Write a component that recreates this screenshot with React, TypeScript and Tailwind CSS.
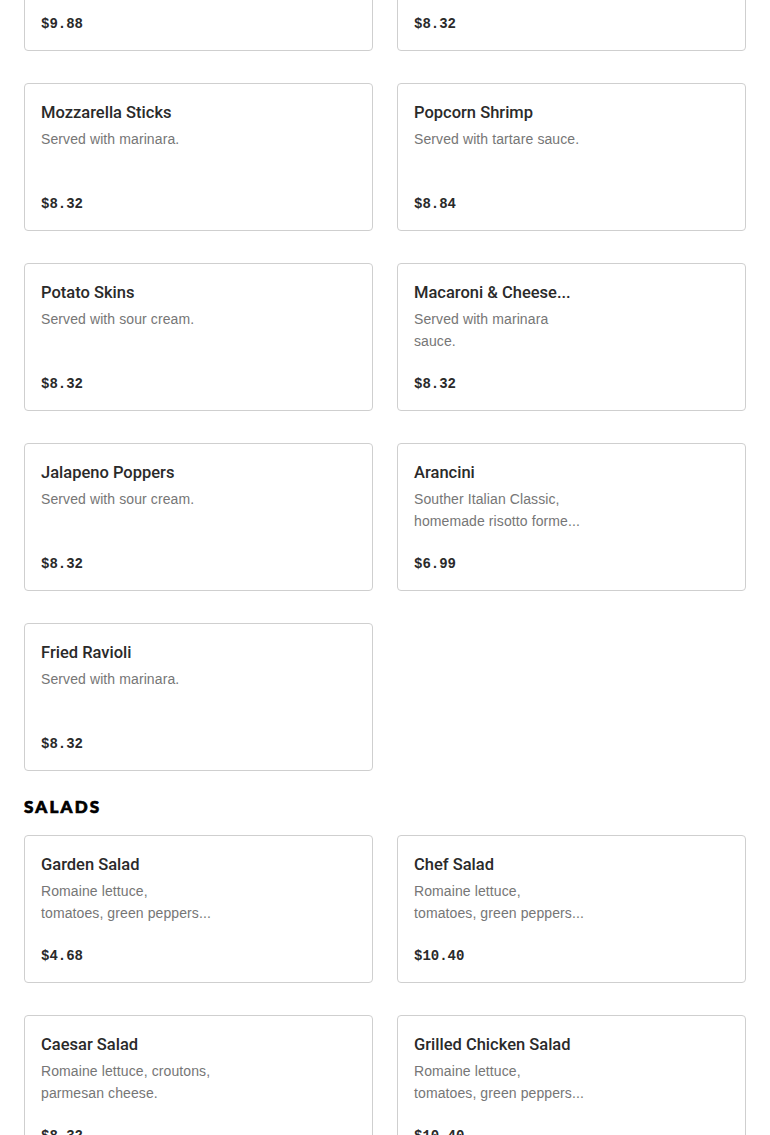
type Item = {
	name: string;
	desc: string;
	price: string;
};

// descriptions are already clipped to two lines, as the menu shows them
const appetizers: Item[] = [
	{ name: "Chicken Wings", desc: "Served with celery\nand blue cheese.", price: "$9.88" },
	{ name: "Onion Rings", desc: "Served with ranch.", price: "$8.32" },
	{ name: "Mozzarella Sticks", desc: "Served with marinara.", price: "$8.32" },
	{ name: "Popcorn Shrimp", desc: "Served with tartare sauce.", price: "$8.84" },
	{ name: "Potato Skins", desc: "Served with sour cream.", price: "$8.32" },
	{ name: "Macaroni & Cheese...", desc: "Served with marinara\nsauce.", price: "$8.32" },
	{ name: "Jalapeno Poppers", desc: "Served with sour cream.", price: "$8.32" },
	{ name: "Arancini", desc: "Souther Italian Classic,\nhomemade risotto forme...", price: "$6.99" },
	{ name: "Fried Ravioli", desc: "Served with marinara.", price: "$8.32" },
];

const salads: Item[] = [
	{ name: "Garden Salad", desc: "Romaine lettuce,\ntomatoes, green peppers...", price: "$4.68" },
	{ name: "Chef Salad", desc: "Romaine lettuce,\ntomatoes, green peppers...", price: "$10.40" },
	{ name: "Caesar Salad", desc: "Romaine lettuce, croutons,\nparmesan cheese.", price: "$8.32" },
	{ name: "Grilled Chicken Salad", desc: "Romaine lettuce,\ntomatoes, green peppers...", price: "$10.40" },
];

const MenuCard = ({ item }: { item: Item }) => {
	return (
		<div className="h-[148px] overflow-hidden rounded-[4px] border border-[#cfcfcf] bg-white p-4">
			<div className="mt-px text-[16.5px] leading-6 font-medium whitespace-nowrap text-[#2a2a2a] [font-family:Roboto,'Liberation_Sans',sans-serif]">
				{item.name}
			</div>
			<div className="mt-[3px] h-[44px] text-[14px] leading-[22px] tracking-[0.1px] whitespace-pre-line text-[#767676] [font-family:'Liberation_Sans',Arial,sans-serif]">
				{item.desc}
			</div>
			<div className="mt-5 text-[14px] leading-6 font-bold text-[#2a2a2a] [font-family:'Liberation_Mono',monospace]">
				{item.price}
			</div>
		</div>
	);
};

export default function App() {
	return (
		<div className="h-[1135px] overflow-hidden bg-white">
			<div className="-mt-[97px] px-6">
				<div className="grid grid-cols-2 gap-x-6 gap-y-8">
					{appetizers.map((item) => (
						<MenuCard key={item.name} item={item} />
					))}
				</div>
				<h2 className="mt-[26px] mb-[18px] h-5 text-[17px] leading-5 font-black uppercase tracking-[2.2px] text-black [font-family:Lato,'DejaVu_Sans',sans-serif] [-webkit-text-stroke:0.7px_black]">
					Salads
				</h2>
				<div className="grid grid-cols-2 gap-x-6 gap-y-8">
					{salads.map((item) => (
						<MenuCard key={item.name} item={item} />
					))}
				</div>
			</div>
		</div>
	);
}
